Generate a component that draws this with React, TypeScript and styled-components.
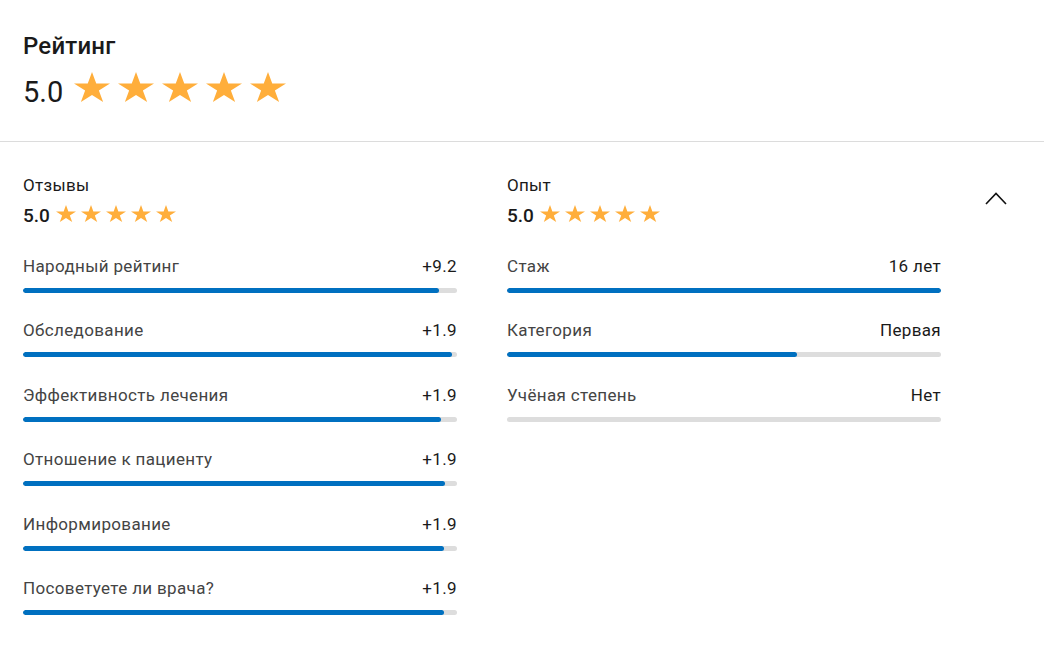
import React from "react";
import styled, { createGlobalStyle } from "styled-components";

const GlobalStyle = createGlobalStyle`
  html, body {
    margin: 0;
    padding: 0;
    background: #fff;
  }
  body {
    font-family: Roboto, "Liberation Sans", Arial, sans-serif;
    color: #1a1a1a;
  }
`;

const Page = styled.div`
  width: 1044px;
  min-height: 649px;
  background: #fff;
`;

const Header = styled.header`
  padding: 34px 23px 31px;
  border-bottom: 1px solid #dcdcdc;
`;

const Title = styled.h2`
  margin: 0;
  font-size: 24px;
  line-height: 24px;
  font-weight: 500;
  letter-spacing: 0.2px;
  color: #1a1a1a;
`;

const RatingRow = styled.div<{ $big?: boolean }>`
  display: flex;
  align-items: baseline;
  margin-top: ${(p) => (p.$big ? "14px" : "9px")};
  font-size: ${(p) => (p.$big ? "29px" : "19px")};
  line-height: ${(p) => (p.$big ? "36px" : "24px")};
  font-weight: ${(p) => (p.$big ? 400 : 500)};
  color: #1a1a1a;
`;

const Stars = styled.div<{ $big?: boolean }>`
  display: flex;
  align-items: baseline;
  gap: ${(p) => (p.$big ? "8px" : "5px")};
  margin-left: ${(p) => (p.$big ? "11px" : "6px")};
`;

const Body = styled.section`
  display: grid;
  grid-template-columns: 434px 434px 24px;
  column-gap: 50px;
  padding: 33px 23px 0;
`;

const Column = styled.div`
  display: flex;
  flex-direction: column;
`;

const SectionTitle = styled.div`
  font-size: 17px;
  line-height: 20px;
  letter-spacing: 0.3px;
  color: #1a1a1a;
`;

const Metrics = styled.div`
  display: flex;
  flex-direction: column;
  gap: 27.4px;
  margin-top: 28px;
`;

const Metric = styled.div`
  display: flex;
  flex-direction: column;
`;

const MetricHead = styled.div`
  display: flex;
  justify-content: space-between;
  font-size: 17px;
  line-height: 20px;
  letter-spacing: 0.35px;
`;

const Label = styled.span`
  color: #444;
`;

const Value = styled.span`
  color: #1a1a1a;
`;

const Track = styled.div`
  margin-top: 12px;
  height: 5px;
  border-radius: 3px;
  background: #dddddd;
  overflow: hidden;
`;

const Fill = styled.div`
  height: 100%;
  background: #0070c0;
  border-radius: 3px;
`;

const Toggle = styled.button`
  margin: 12px 0 0 -7px;
  padding: 0;
  width: 24px;
  height: 24px;
  border: 0;
  background: none;
  cursor: pointer;
  display: flex;
`;

const Star: React.FC<{ w: number; h: number }> = ({ w, h }) => (
  <svg width={w} height={h} viewBox="0 0 36 30" preserveAspectRatio="none">
    <polygon
      fill="#ffae3b"
      points="18,0 22.25,11.46 36,11.46 24.88,18.54 29.13,30 18,22.92 6.87,30 11.12,18.54 0,11.46 13.75,11.46"
    />
  </svg>
);

const Rating: React.FC<{ value: string; big?: boolean }> = ({ value, big }) => (
  <RatingRow $big={big}>
    <span>{value}</span>
    <Stars $big={big}>
      {[0, 1, 2, 3, 4].map((i) =>
        big ? <Star key={i} w={36} h={30} /> : <Star key={i} w={20} h={17} />,
      )}
    </Stars>
  </RatingRow>
);

type Item = { label: string; value: string; pct: number };

const reviews: Item[] = [
  { label: "Народный рейтинг", value: "+9.2", pct: 95.8 },
  { label: "Обследование", value: "+1.9", pct: 98.8 },
  { label: "Эффективность лечения", value: "+1.9", pct: 96.3 },
  { label: "Отношение к пациенту", value: "+1.9", pct: 97.2 },
  { label: "Информирование", value: "+1.9", pct: 97 },
  { label: "Посоветуете ли врача?", value: "+1.9", pct: 97 },
];

const experience: Item[] = [
  { label: "Стаж", value: "16 лет", pct: 100 },
  { label: "Категория", value: "Первая", pct: 66.8 },
  { label: "Учёная степень", value: "Нет", pct: 0 },
];

const Group: React.FC<{ title: string; items: Item[] }> = ({ title, items }) => (
  <Column>
    <SectionTitle>{title}</SectionTitle>
    <Rating value="5.0" />
    <Metrics>
      {items.map((it) => (
        <Metric key={it.label}>
          <MetricHead>
            <Label>{it.label}</Label>
            <Value>{it.value}</Value>
          </MetricHead>
          <Track>
            <Fill style={{ width: `${it.pct}%` }} />
          </Track>
        </Metric>
      ))}
    </Metrics>
  </Column>
);

export default function App() {
  return (
    <Page>
      <GlobalStyle />
      <Header>
        <Title>Рейтинг</Title>
        <Rating value="5.0" big />
      </Header>
      <Body>
        <Group title="Отзывы" items={reviews} />
        <Group title="Опыт" items={experience} />
        <Toggle aria-label="Свернуть">
          <svg width="24" height="24" viewBox="0 0 24 24">
            <polyline
              points="2,17 12,6.5 22,17"
              fill="none"
              stroke="#111"
              strokeWidth="1.6"
            />
          </svg>
        </Toggle>
      </Body>
    </Page>
  );
}
